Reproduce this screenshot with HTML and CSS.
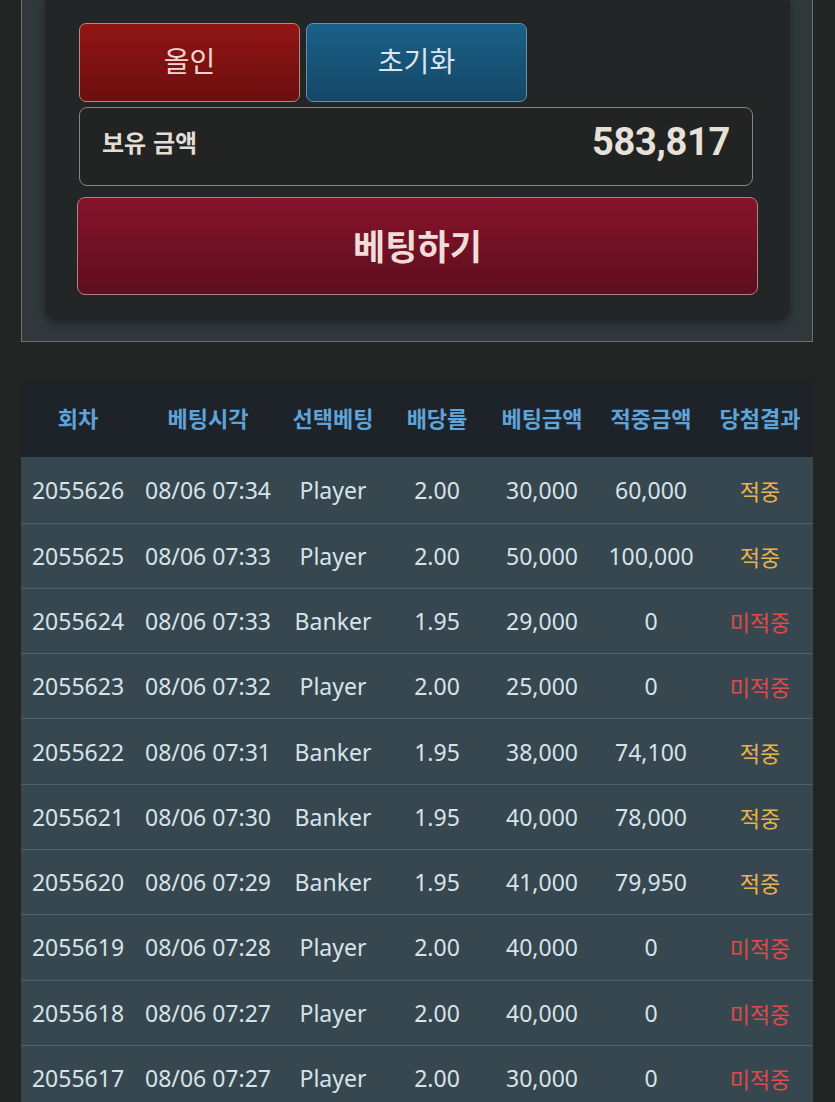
FILE: index.html
```html
<!DOCTYPE html>
<html lang="ko">
<head>
<meta charset="utf-8">
<link rel="stylesheet" href="styles.css">
</head>
<body>
<section class="panel">
  <div class="card">
    <div class="btn-row">
      <button class="btn btn-red">올인</button>
      <button class="btn btn-blue">초기화</button>
    </div>
    <div class="balance">
      <span class="balance-label">보유 금액</span>
      <span class="balance-value">583,817</span>
    </div>
    <button class="bet-btn">베팅하기</button>
  </div>
</section>

<table class="history">
  <colgroup>
    <col class="c1"><col class="c2"><col class="c3"><col class="c4"><col class="c5"><col class="c6"><col class="c7">
  </colgroup>
  <thead>
    <tr><th>회차</th><th>베팅시각</th><th>선택베팅</th><th>배당률</th><th>베팅금액</th><th>적중금액</th><th>당첨결과</th></tr>
  </thead>
  <tbody>
    <tr><td>2055626</td><td>08/06 07:34</td><td>Player</td><td>2.00</td><td>30,000</td><td>60,000</td><td class="win">적중</td></tr>
    <tr><td>2055625</td><td>08/06 07:33</td><td>Player</td><td>2.00</td><td>50,000</td><td>100,000</td><td class="win">적중</td></tr>
    <tr><td>2055624</td><td>08/06 07:33</td><td>Banker</td><td>1.95</td><td>29,000</td><td>0</td><td class="lose">미적중</td></tr>
    <tr><td>2055623</td><td>08/06 07:32</td><td>Player</td><td>2.00</td><td>25,000</td><td>0</td><td class="lose">미적중</td></tr>
    <tr><td>2055622</td><td>08/06 07:31</td><td>Banker</td><td>1.95</td><td>38,000</td><td>74,100</td><td class="win">적중</td></tr>
    <tr><td>2055621</td><td>08/06 07:30</td><td>Banker</td><td>1.95</td><td>40,000</td><td>78,000</td><td class="win">적중</td></tr>
    <tr><td>2055620</td><td>08/06 07:29</td><td>Banker</td><td>1.95</td><td>41,000</td><td>79,950</td><td class="win">적중</td></tr>
    <tr><td>2055619</td><td>08/06 07:28</td><td>Player</td><td>2.00</td><td>40,000</td><td>0</td><td class="lose">미적중</td></tr>
    <tr><td>2055618</td><td>08/06 07:27</td><td>Player</td><td>2.00</td><td>40,000</td><td>0</td><td class="lose">미적중</td></tr>
    <tr><td>2055617</td><td>08/06 07:27</td><td>Player</td><td>2.00</td><td>30,000</td><td>0</td><td class="lose">미적중</td></tr>
  </tbody>
</table>
</body>
</html>
```

FILE: styles.css
```css
* { box-sizing: border-box; }

html, body {
  margin: 0;
  padding: 0;
  background: #232424;
  font-family: "Noto Sans", "Noto Sans CJK KR", sans-serif;
}

body {
  height: 1102px;
  overflow: hidden;
}

.panel {
  margin: 0 22px 0 21px;
  background: #30383b;
  border: 1px solid #70736c;
  border-top: none;
  padding: 0 22px 21px 23px;
}

.card {
  background: #222626;
  border-radius: 0 0 12px 12px;
  box-shadow: 0 3px 8px rgba(0, 0, 0, 0.35);
  padding: 23px 32px 25px 32px;
}

.btn-row {
  display: flex;
  gap: 6px;
  padding-left: 2px;
}

.btn {
  width: 221px;
  height: 79px;
  border-radius: 7px;
  font-family: "Noto Sans CJK KR", "Noto Sans", sans-serif;
  font-size: 28px;
  font-weight: 400;
  padding: 0 0 6px 0;
  cursor: pointer;
}

.btn-red {
  background: linear-gradient(#921515, #6c0e0e);
  border: 1px solid #b58a80;
  color: #f3d6d0;
}

.btn-blue {
  background: linear-gradient(#1a6088, #154767);
  border: 1px solid #6b8ea6;
  color: #d9e6ee;
}

.balance {
  margin: 5px 5px 0 2px;
  height: 79px;
  border: 1px solid #85857c;
  border-radius: 8px;
  background: #222424;
  display: flex;
  align-items: center;
  justify-content: space-between;
  padding: 0 22px 10px 22px;
}

.balance-label {
  font-family: "Noto Sans CJK KR", sans-serif;
  font-weight: 700;
  font-size: 24px;
  color: #e2ded6;
}

.balance-value {
  font-family: Roboto, "Noto Sans", sans-serif;
  font-weight: 700;
  font-size: 38px;
  color: #e6e2da;
  letter-spacing: -0.3px;
}

.bet-btn {
  display: block;
  width: 100%;
  margin-top: 11px;
  height: 98px;
  border: 1px solid #b3807f;
  border-radius: 8px;
  background: linear-gradient(#87132b, #5d0e1e);
  color: #f0dcd8;
  font-family: "Noto Sans CJK KR", sans-serif;
  font-weight: 700;
  font-size: 35px;
  padding: 0 0 4px 0;
}

.history {
  margin: 38px 22px 0 21px;
  width: 792px;
  border-collapse: collapse;
  table-layout: fixed;
}

.c1 { width: 114px; }
.c2 { width: 146px; }
.c3 { width: 104px; }
.c4 { width: 104px; }
.c5 { width: 106px; }
.c6 { width: 112px; }
.c7 { width: 106px; }

.history th {
  background: #1d2329;
  height: 77px;
  color: #5ea3da;
  font-family: "Noto Sans CJK KR", sans-serif;
  font-weight: 700;
  font-size: 22px;
  text-align: center;
  padding: 0 0 4px 0;
  white-space: nowrap;
}

.history td {
  background: #37474f;
  height: 65.3px;
  border-top: 1px solid #4a6373;
  color: #d6e3ea;
  font-size: 23px;
  text-align: center;
  padding: 0;
  white-space: nowrap;
}

.history tbody tr:first-child td {
  border-top: none;
  height: 66px;
}

.history td.win {
  color: #eab24c;
  font-size: 22px;
}

.history td.lose {
  color: #e04a4a;
  font-size: 22px;
}
```
